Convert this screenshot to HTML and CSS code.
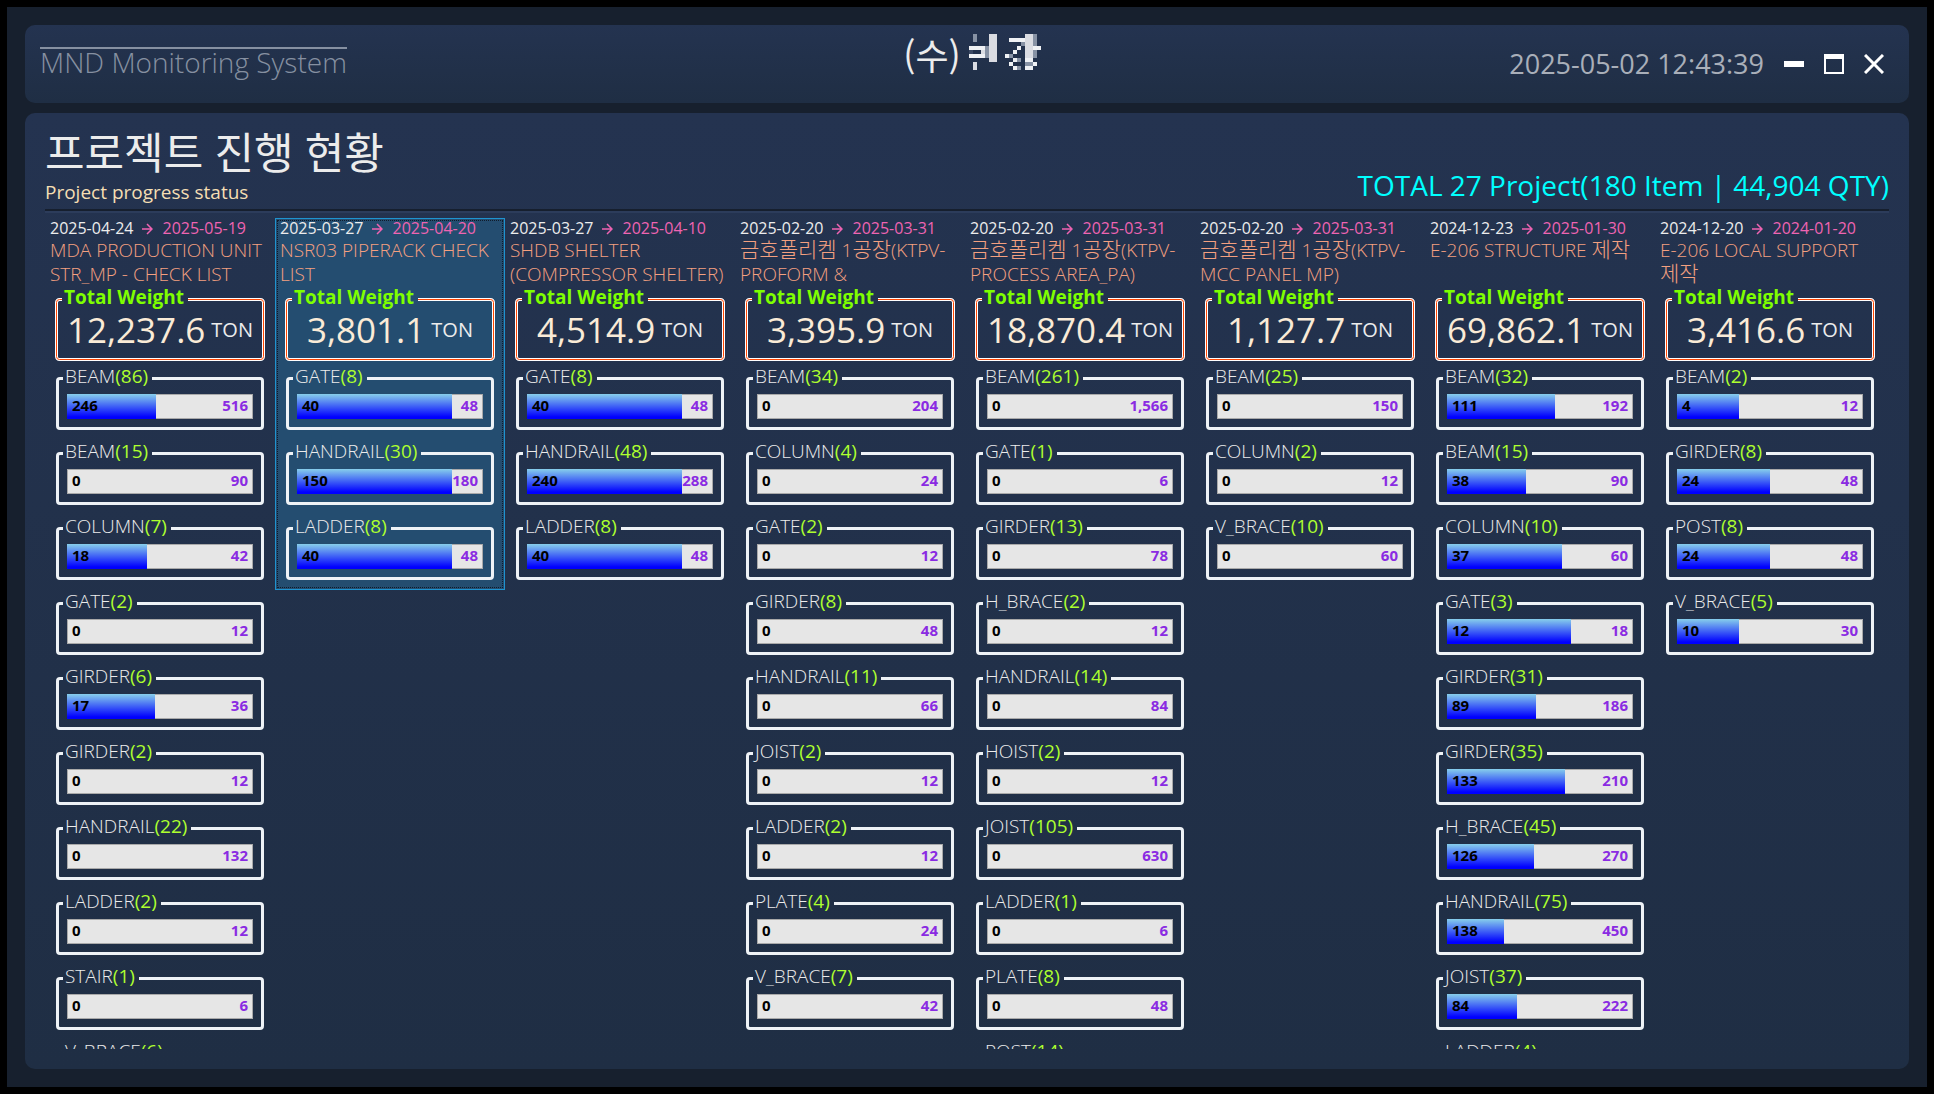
FILE: index.html
```
<!DOCTYPE html>
<html lang="ko">
<head>
    <meta charset="UTF-8" />
    <meta name="viewport" content="width=device-width, initial-scale=1.0" />
    <title>MND Monitoring System</title>
    <link rel="stylesheet" href="styles.css">
</head>
<body>
    <div class="window">
        <header class="card topbar">
            <div class="system">MND Monitoring System</div>
            <div class="company">
                <span>(수)</span>
                <svg class="mosaic" viewBox="0 0 18 9" shape-rendering="crispEdges" aria-hidden="true">
                    <g fill="#eff1f4">
                        <rect x="0" y="3" width="4" height="1"/>
                        <rect x="0" y="5" width="4" height="1"/>
                        <rect x="10" y="1" width="4" height="1"/>
                        <rect x="12" y="3" width="1" height="1"/>
                        <rect x="11" y="4" width="1" height="1"/>
                        <rect x="9" y="5" width="1" height="1"/>
                        <rect x="11" y="6" width="1" height="1"/>
                        <rect x="10" y="7" width="1" height="1"/>
                        <rect x="11" y="8" width="1" height="1"/>
                        <rect x="16" y="3" width="2" height="1"/>
                        <rect x="16" y="7" width="1" height="1"/>
                        <rect x="14" y="6" width="2" height="1"/>
                        <rect x="14" y="8" width="2" height="1"/>
                    </g>
                    <g fill="#dadce2">
                        <rect x="5" y="0" width="2" height="7"/>
                        <rect x="14" y="0" width="2" height="6"/>
                        <rect x="1" y="7" width="1" height="2"/>
                        <rect x="3" y="4" width="1" height="1"/>
                    </g>
                    <g fill="#8792a4">
                        <rect x="1" y="0" width="1" height="2"/>
                        <rect x="4" y="3" width="1" height="3"/>
                        <rect x="13" y="2" width="1" height="1"/>
                        <rect x="10" y="5" width="1" height="1"/>
                        <rect x="12" y="6" width="1" height="1"/>
                        <rect x="12" y="8" width="1" height="1"/>
                        <rect x="16" y="0" width="1" height="3"/>
                        <rect x="16" y="4" width="1" height="2"/>
                        <rect x="14" y="7" width="2" height="1"/>
                    </g>
                    <rect x="0" y="4" width="1" height="1" fill="#3a4863"/>
                </svg>
            </div>
            <div class="controls">
                <time class="clock">2025-05-02 12:43:39</time>
                <button type="button" aria-label="Minimize"><svg viewBox="0 0 20 20"><path d="M0 10h20" stroke-width="6"/></svg></button>
                <button type="button" aria-label="Maximize"><svg viewBox="0 0 20 20"><path d="M1 2v17h18V2" stroke-width="2"/><path d="M0 2.5h20" stroke-width="5"/></svg></button>
                <button type="button" aria-label="Close"><svg viewBox="0 0 20 20"><path d="M1 1l18 18M19 1L1 19" stroke-width="3"/></svg></button>
            </div>
        </header>

        <main class="card board">
            <div class="board-head">
                <div>
                    <h1>프로젝트 진행 현황</h1>
                    <p class="subtitle">Project progress status</p>
                </div>
                <p class="total">TOTAL 27 Project(180 Item | 44,904 QTY)</p>
            </div>
            <div class="projects" id="projects"></div>
        </main>
    </div>

    <script src="app.js"></script>
</body>
</html>
```

FILE: styles.css
```
* {
    box-sizing: border-box;
}
body {
    margin: 0;
    padding: 7px;
    height: 100vh;
    background: #000;
    color: #ececec;
    font-family: "Open Sans", "Noto Sans CJK KR", sans-serif;
}
h1, p {
    margin: 0;
    font-weight: normal;
}
.window {
    display: flex;
    flex-direction: column;
    gap: 10px;
    height: 100%;
    padding: 18px;
    background: #17202e;
}
.card {
    border-radius: 10px;
    background: linear-gradient(#243350, #1f2e44);
}

/* top bar */
.topbar {
    display: grid;
    grid-template-columns: 1fr auto 1fr;
    padding: 0 25px 0 15px;
    height: 78px;
}
.system {
    align-self: center;
    justify-self: start;
    padding-bottom: 6px;
    border-top: 2px solid #8690a1;
    color: #8690a1;
    font-size: 28px;
    font-weight: 300;
    line-height: 26px;
}
.company {
    display: flex;
    align-items: center;
    gap: 8px;
    padding: 0 0 24px 20px;
    font-family: "Noto Sans CJK KR", sans-serif;
    font-size: 36px;
    line-height: 36px;
}
.company span {
    padding-top: 4px;
}
.mosaic {
    width: 72px;
    height: 36px;
}
.controls {
    display: flex;
    align-items: center;
    justify-content: flex-end;
    gap: 20px;
}
.clock {
    color: #a9afb9;
    font-size: 27px;
    line-height: 32px;
}
.controls button {
    display: block;
    padding: 0;
    border: none;
    background: none;
    cursor: pointer;
}
.controls svg {
    display: block;
    width: 20px;
    height: 20px;
    fill: none;
    stroke: #fff;
}

/* project board */
.board {
    display: flex;
    flex-direction: column;
    flex: 1;
    min-height: 0;
    padding: 14px 20px 20px;
}
.board-head {
    display: flex;
    justify-content: space-between;
    align-items: flex-end;
    padding-bottom: 3px;
    border-bottom: 2px solid #161f2e;
    box-shadow: 0 2px #2c3c5b;
}
h1 {
    font-size: 43px;
    line-height: 52px;
}
.subtitle {
    color: #f5deb3;
    font-size: 19px;
    line-height: 27px;
}
.total {
    padding-bottom: 4px;
    color: #00ffff;
    font-size: 28px;
    line-height: 34px;
}
.projects {
    display: grid;
    grid-template-columns: repeat(8, minmax(0, 1fr));
    align-items: start;
    flex: 1;
    min-height: 0;
    margin-top: 7px;
    padding-right: 4px;
    overflow: hidden;
}
.project {
    padding-bottom: 9px;
    border: 1px solid transparent;
}
.project.selected {
    border-color: #1f93cf;
    outline: 1px dotted #101b2a;
    outline-offset: -3px;
    background: #244d70;
}
.period {
    display: flex;
    align-items: center;
    gap: 9px;
    padding-left: 4px;
    font-size: 16px;
    line-height: 19px;
}
.period svg {
    width: 11px;
    height: 12px;
    fill: none;
    stroke: #ef64b2;
    stroke-width: 1.5;
}
.due {
    color: #ef64b2;
}
.name {
    height: 48px;
    padding-left: 4px;
    overflow: hidden;
    color: #f4a080;
    font-size: 19px;
    font-weight: 300;
    line-height: 24px;
    word-break: keep-all;
}
.ko {
    font-size: 21px;
    line-height: 20px;
}
fieldset {
    min-width: 0;
    border: 3px solid #eef2f6;
    border-radius: 4px;
}
legend {
    margin-left: -4px;
    padding: 0 4px 4px 2px;
    line-height: 20px;
}
.weight {
    display: flex;
    justify-content: center;
    align-items: center;
    gap: 6px;
    margin: 1px 9px 5px;
    padding: 0 8px 9px;
    border-image: url("data:image/svg+xml,%3Csvg xmlns='http://www.w3.org/2000/svg' width='30' height='30'%3E%3Crect x='1.5' y='1.5' width='27' height='27' rx='3' fill='none' stroke='white' stroke-width='3'/%3E%3Crect x='1.5' y='1.5' width='27' height='27' rx='3' fill='none' stroke='orangered'/%3E%3C/svg%3E") 6 / 6px;
}
.weight legend {
    color: #7fff00;
    font-size: 19px;
    font-weight: bold;
}
.weight output {
    color: #faebd7;
    font-size: 35px;
    line-height: 38px;
}
.unit {
    font-size: 20px;
    line-height: 38px;
}
.item {
    margin: 0 10px 11px;
    padding: 4px 8px 8px;
}
.item:last-child {
    margin-bottom: 0;
}
.item legend {
    font-size: 19px;
    font-weight: 300;
}
.item legend b {
    color: #adff2f;
    font-weight: normal;
}
.bar {
    display: grid;
    grid-template-columns: 1fr 1fr;
    align-items: center;
    font-size: 15px;
    font-weight: bold;
    line-height: 23px;
}
.bar progress {
    grid-area: 1 / 1 / 2 / 3;
    width: 100%;
    height: 25px;
    border: none;
    appearance: none;
}
.bar progress::-webkit-progress-bar {
    background: #e6e6e6;
    box-shadow: inset 0 0 0 1px #a9a9a9;
}
.bar progress::-webkit-progress-value {
    background: linear-gradient(#87ceeb, #0000ff 92%);
}
.done, .qty {
    grid-row: 1;
    z-index: 1;
    padding: 0 5px 2px;
}
.done {
    grid-column: 1;
    color: #000;
}
.qty {
    grid-column: 2;
    color: #8a2be2;
    text-align: right;
}
```

FILE: app.js
```
// item: [name, count, done, qty]
const projects = [
    { start: "2025-04-24", due: "2025-05-19", name: "MDA PRODUCTION UNIT STR_MP - CHECK LIST", weight: "12,237.6",
      items: [["BEAM", 86, 246, 516], ["BEAM", 15, 0, 90], ["COLUMN", 7, 18, 42], ["GATE", 2, 0, 12], ["GIRDER", 6, 17, 36],
              ["GIRDER", 2, 0, 12], ["HANDRAIL", 22, 0, 132], ["LADDER", 2, 0, 12], ["STAIR", 1, 0, 6], ["V_BRACE", 6, 0, 36]] },
    { start: "2025-03-27", due: "2025-04-20", name: "NSR03 PIPERACK CHECK LIST", weight: "3,801.1", selected: true,
      items: [["GATE", 8, 40, 48], ["HANDRAIL", 30, 150, 180], ["LADDER", 8, 40, 48]] },
    { start: "2025-03-27", due: "2025-04-10", name: "SHDB SHELTER (COMPRESSOR SHELTER)", weight: "4,514.9",
      items: [["GATE", 8, 40, 48], ["HANDRAIL", 48, 240, 288], ["LADDER", 8, 40, 48]] },
    { start: "2025-02-20", due: "2025-03-31", name: "금호폴리켐 1공장(KTPV-PROFORM &", weight: "3,395.9",
      items: [["BEAM", 34, 0, 204], ["COLUMN", 4, 0, 24], ["GATE", 2, 0, 12], ["GIRDER", 8, 0, 48], ["HANDRAIL", 11, 0, 66],
              ["JOIST", 2, 0, 12], ["LADDER", 2, 0, 12], ["PLATE", 4, 0, 24], ["V_BRACE", 7, 0, 42]] },
    { start: "2025-02-20", due: "2025-03-31", name: "금호폴리켐 1공장(KTPV-PROCESS AREA_PA)", weight: "18,870.4",
      items: [["BEAM", 261, 0, 1566], ["GATE", 1, 0, 6], ["GIRDER", 13, 0, 78], ["H_BRACE", 2, 0, 12], ["HANDRAIL", 14, 0, 84],
              ["HOIST", 2, 0, 12], ["JOIST", 105, 0, 630], ["LADDER", 1, 0, 6], ["PLATE", 8, 0, 48], ["POST", 14, 0, 84]] },
    { start: "2025-02-20", due: "2025-03-31", name: "금호폴리켐 1공장(KTPV-MCC PANEL MP)", weight: "1,127.7",
      items: [["BEAM", 25, 0, 150], ["COLUMN", 2, 0, 12], ["V_BRACE", 10, 0, 60]] },
    { start: "2024-12-23", due: "2025-01-30", name: "E-206 STRUCTURE 제작", weight: "69,862.1",
      items: [["BEAM", 32, 111, 192], ["BEAM", 15, 38, 90], ["COLUMN", 10, 37, 60], ["GATE", 3, 12, 18], ["GIRDER", 31, 89, 186],
              ["GIRDER", 35, 133, 210], ["H_BRACE", 45, 126, 270], ["HANDRAIL", 75, 138, 450], ["JOIST", 37, 84, 222], ["LADDER", 4, 0, 24]] },
    { start: "2024-12-20", due: "2024-01-20", name: "E-206 LOCAL SUPPORT 제작", weight: "3,416.6",
      items: [["BEAM", 2, 4, 12], ["GIRDER", 8, 24, 48], ["POST", 8, 24, 48], ["V_BRACE", 5, 10, 30]] }
];

function itemHtml([name, count, done, qty]) {
    return `<fieldset class="item">
        <legend>${name}<b>(${count})</b></legend>
        <div class="bar">
            <progress value="${done}" max="${qty}" aria-label="${name}"></progress>
            <span class="done">${done}</span>
            <span class="qty">${qty.toLocaleString("en-US")}</span>
        </div>
    </fieldset>`;
}

// hangul is set a little larger than the latin letters
function nameHtml(name) {
    return name.replace("&", "&amp;").replace(/[가-힣]+/g, '<span class="ko">$&</span>');
}

function projectHtml(p) {
    return `<section class="project${p.selected ? " selected" : ""}">
        <div class="period">
            <span>${p.start}</span>
            <svg viewBox="0 0 11 12"><path d="M0 6h10M5 1l5 5-5 5"/></svg>
            <span class="due">${p.due}</span>
        </div>
        <div class="name">${nameHtml(p.name)}</div>
        <fieldset class="weight">
            <legend>Total Weight</legend>
            <output>${p.weight}</output><span class="unit">TON</span>
        </fieldset>
        ${p.items.map(itemHtml).join("")}
    </section>`;
}

document.getElementById("projects").innerHTML = projects.map(projectHtml).join("");
```
